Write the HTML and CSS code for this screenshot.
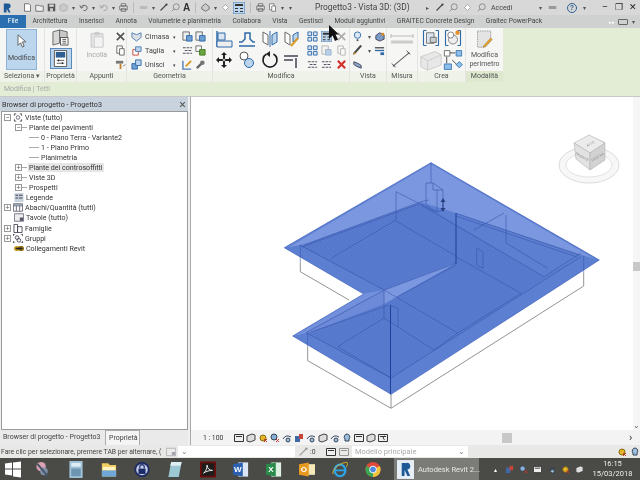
FILE: index.html
```html
<!DOCTYPE html>
<html lang="it">
<head>
<meta charset="utf-8">
<title>Progetto3 - Vista 3D: (3D)</title>
<link rel="stylesheet" href="styles.css">
</head>
<body>
<svg class="defs" width="0" height="0">
  <defs><pattern id="hatch" width="2" height="2" patternUnits="userSpaceOnUse" patternTransform="rotate(-30)"><path d="M0 .5h2" stroke="#3f62bd" stroke-width=".7"/></pattern></defs>
  <symbol id="doc" viewBox="0 0 12 12"><path d="M2 1h6l2 2v8H2z" fill="#fff" stroke="#555"/></symbol>
  <symbol id="folder" viewBox="0 0 12 12"><path d="M1 3h4l1 1h5v7H1z" fill="#eee" stroke="#555"/></symbol>
  <symbol id="save" viewBox="0 0 12 12"><path d="M1 1h10v10H1z" fill="#555"/><path d="M3 2h6v3H3z" fill="#ddd"/><path d="M4 7h4v4H4z" fill="#ccc"/></symbol>
  <symbol id="cube" viewBox="0 0 12 12"><path d="M6 1l5 2.500v5.500l-5 2.500-5-2.500V3.500z" fill="#b8b8b8" stroke="#777"/></symbol>
  <symbol id="undo" viewBox="0 0 12 12"><path d="M3 6a4 3.500 0 1 1 3 4M1 3l2 4 3-2" fill="none" stroke="#666" stroke-width="1.300"/></symbol>
  <symbol id="print" viewBox="0 0 12 12"><path d="M3 1h6v3H3zM1 4h10v5H1zM3 7h6v4H3z" fill="#eee" stroke="#555"/></symbol>
  <symbol id="measure" viewBox="0 0 12 12"><path d="M1 4h10v4H1z" fill="#999"/></symbol>
  <symbol id="line" viewBox="0 0 12 12"><path d="M2 10l8-8" stroke="#444" stroke-width="1.500"/><circle cx="10" cy="2" r="1.500" fill="#444"/></symbol>
  <symbol id="tag" viewBox="0 0 12 12"><circle cx="7" cy="5" r="4" fill="none" stroke="#777"/><path d="M4 8l-3 3" stroke="#777"/></symbol>
  <symbol id="house" viewBox="0 0 12 12"><path d="M6 1l5 4v3l-5 3-5-3V5z" fill="#ccc" stroke="#555"/></symbol>
  <symbol id="diamond" viewBox="0 0 12 12"><path d="M6 2l4 4-4 4-4-4z" fill="#fff" stroke="#999"/></symbol>
  <symbol id="panels" viewBox="0 0 12 12"><path d="M0 0h12v12H0z" fill="#bcd4ec" stroke="#4d7fb5"/><path d="M2 2h8v2H2zM2 6h3v1H2zM2 9h3v1H2zM7 6h3v1H7zM7 9h3v1H7z" fill="#333"/></symbol>
  <symbol id="closex" viewBox="0 0 12 12"><path d="M2 2l8 8M10 2l-8 8" stroke="#555" stroke-width="1.800"/></symbol>
  <symbol id="redx" viewBox="0 0 12 12"><path d="M2 2l8 8M10 2l-8 8" stroke="#d4322c" stroke-width="2.400"/></symbol>
  <symbol id="copy" viewBox="0 0 12 12"><path d="M2 1h6v8H2z" fill="#fff" stroke="#666"/><path d="M5 4h5v7H5z" fill="#fff" stroke="#666"/></symbol>
  <symbol id="brush" viewBox="0 0 12 12"><path d="M1 2h8v3H1z" fill="#777"/><path d="M5 5h2v6H5z" fill="#c08030"/><path d="M9 8l2-2" stroke="#555"/></symbol>
  <symbol id="wall" viewBox="0 0 12 12"><path d="M1 7V2l5 2 5-2v5l-5 4z" fill="#dcdfe3" stroke="#4d7fb5"/></symbol>
  <symbol id="cut" viewBox="0 0 12 12"><path d="M2 5h6v6H2z" fill="#fff" stroke="#c4453a"/><path d="M5 2h6v5H5z" fill="#bcd4ec" stroke="#4d7fb5"/></symbol>
  <symbol id="join" viewBox="0 0 12 12"><path d="M1 5h6v6H1z" fill="#6f9fd4" stroke="#2e6aa8"/><path d="M5 1h6v6H5z" fill="#bcd4ec" stroke="#2e6aa8"/></symbol>
  <symbol id="rect2" viewBox="0 0 12 12"><path d="M1 1h7v9H1z" fill="#eee" stroke="#666"/><path d="M5 5h6v6H5z" fill="#6f9fd4" stroke="#2e6aa8"/></symbol>
  <symbol id="dash" viewBox="0 0 12 12"><path d="M1 3h10M3 6h8M1 9h10" stroke="#556" stroke-width="1.300" stroke-dasharray="3 1"/></symbol>
  <symbol id="green" viewBox="0 0 12 12"><path d="M1 1h6v6H1z" fill="#fff" stroke="#666"/><path d="M5 5h6v6H5z" fill="#6da544" stroke="#3e7a1d"/></symbol>
  <symbol id="pen" viewBox="0 0 12 12"><path d="M1 2v9h9" fill="none" stroke="#4d7fb5" stroke-width="1.500"/><path d="M4 8l6-6" stroke="#d99a26" stroke-width="2"/></symbol>
  <symbol id="wrench" viewBox="0 0 12 12"><path d="M2 10l5-5" stroke="#666" stroke-width="2.500"/><circle cx="8" cy="4" r="2.500" fill="#777"/></symbol>
  <symbol id="align" viewBox="0 0 18 18"><path d="M2 1v16" stroke="#2e6aa8" stroke-width="1.500"/><path d="M3 3h7v7H3z" fill="#dbe6f2" stroke="#2e6aa8"/><path d="M2 11h15v6H2z" fill="#eee" stroke="#2e6aa8"/></symbol>
  <symbol id="offset" viewBox="0 0 18 18"><path d="M1 16h16M1 12h3l3-3V3h5v6l3 3h2" fill="none" stroke="#2e6aa8" stroke-width="1.500"/></symbol>
  <symbol id="mirror1" viewBox="0 0 18 18"><path d="M2 2l5 3v10l-5-3z" fill="#fff" stroke="#666"/><path d="M16 2l-5 3v10l5-3z" fill="#bcd4ec" stroke="#2e6aa8"/><path d="M9 1v16" stroke="#2e6aa8"/></symbol>
  <symbol id="mirror2" viewBox="0 0 18 18"><path d="M2 2l5 3v10l-5-3z" fill="#fff" stroke="#666"/><path d="M15 2l-5 3v7l5-3z" fill="#bcd4ec" stroke="#2e6aa8"/><path d="M8 16l7-8" stroke="#d99a26" stroke-width="2"/></symbol>
  <symbol id="move" viewBox="0 0 18 18"><path d="M9 1l3 3h-2v3H8V4H6zM9 17l-3-3h2v-3h2v3h2zM1 9l3-3v2h3v2H4v2zM17 9l-3 3v-2h-3V8h3V6z" fill="#222"/><circle cx="9" cy="9" r="1.500" fill="none" stroke="#222"/></symbol>
  <symbol id="copy2" viewBox="0 0 18 18"><circle cx="6" cy="5" r="4" fill="#fff" stroke="#555"/><circle cx="11" cy="12" r="4.500" fill="#bcd4ec" stroke="#2e6aa8"/></symbol>
  <symbol id="rotate" viewBox="0 0 18 18"><path d="M12.500 3a7 7 0 1 1-7 0" fill="none" stroke="#222" stroke-width="1.700"/><path d="M9 0v6l-4-3z" fill="#222"/></symbol>
  <symbol id="trim" viewBox="0 0 18 18"><path d="M1 5h14M1 9h9M13 17V7" stroke="#445" stroke-width="1.500"/></symbol>
  <symbol id="grid4" viewBox="0 0 12 12"><path d="M1 1h4v4H1zM7 1h4v4H7zM1 7h4v4H1zM7 7h4v4H7z" fill="#dbe6f2" stroke="#2e6aa8"/></symbol>
  <symbol id="bulb" viewBox="0 0 12 12"><circle cx="6" cy="4.500" r="3.500" fill="#dbe9f7" stroke="#2e6aa8"/><path d="M5 9h2v2H5z" fill="#556"/></symbol>
  <symbol id="boxes" viewBox="0 0 12 12"><path d="M2 5l4-3 5 2v5l-5 2-4-2z" fill="#7a9cc6" stroke="#445"/><path d="M8 2h3v3H8z" fill="#d98a26"/></symbol>
  <symbol id="brush2" viewBox="0 0 12 12"><path d="M1 11l3-2 7-8-2-1-7 8z" fill="#444"/><path d="M1 11l2-3 2 1z" fill="#d99a26"/></symbol>
  <symbol id="lines" viewBox="0 0 12 12"><path d="M1 3h10" stroke="#555" stroke-width="1.500"/><path d="M1 6h10" stroke="#2e6aa8" stroke-width="1.500"/><path d="M7 8h4v3H7z" fill="#2e6aa8"/></symbol>
  <symbol id="boxstack" viewBox="0 0 12 12"><path d="M2 3l5 2 3 2v3l-5-2-3-2z" fill="#8aa8cc" stroke="#445"/></symbol>
  <symbol id="create1" viewBox="0 0 24 24"><path d="M2 2v20M2 2h4M2 22h4M22 2v20M22 2h-4M22 22h-4" fill="none" stroke="#2e6aa8" stroke-width="1.500"/><path d="M6 5h10v14H6z" fill="#dbe6f2" stroke="#555"/><path d="M11 11h8v7h-8z" fill="#ccc" stroke="#555"/></symbol>
  <symbol id="create2" viewBox="0 0 24 24"><path d="M2 2v20M2 2h4M2 22h4M22 2v20M22 2h-4M22 22h-4" fill="none" stroke="#2e6aa8" stroke-width="1.500"/><circle cx="12" cy="14" r="6" fill="#eee" stroke="#666"/><circle cx="9" cy="8" r="4" fill="#fff" stroke="#666"/><circle cx="18" cy="5" r="3" fill="#e8902c"/></symbol>
  <symbol id="mass" viewBox="0 0 26 26"><path d="M1 9l17-6 7 4v12L9 25 1 21z" fill="#e8e8e8" stroke="#c8c8c8"/><path d="M1 9l8 5v11M9 14l16-7" fill="none" stroke="#c8c8c8"/></symbol>
  <symbol id="flow" viewBox="0 0 26 28"><path d="M2 2h7v7H2z" fill="#fff" stroke="#555"/><path d="M17 2h7v7h-7z" fill="#8cc0ec" stroke="#2e6aa8"/><path d="M9 5h7M5 10v8M12 14l6 6" stroke="#222"/><path d="M2 19h9v7H2z" fill="#8cc0ec" stroke="#2e6aa8"/><path d="M21 16l4 4-4 4-4-4z" fill="#8cc0ec" stroke="#2e6aa8"/></symbol>
  <symbol id="modper" viewBox="0 0 22 24"><path d="M2 1h17v13l-7 8H2z" fill="#e4e4e4" stroke="#8e8e8e" stroke-dasharray="2 1"/><path d="M10 20l9-10 2 2-9 9-3 1z" fill="#e8a52c" stroke="#9a6a14" stroke-width=".6"/></symbol>
  <symbol id="clip" viewBox="0 0 16 20"><path d="M1 3h14v16H1z" fill="#e3e3e3" stroke="#c5c5c5"/><path d="M5 1h6v4H5z" fill="#ccc"/><path d="M5 7h10v12H5z" fill="#f2f2f2" stroke="#d0d0d0"/></symbol>
  <symbol id="prop1" viewBox="0 0 18 18"><path d="M1 3l7-2v14l-7 2z" fill="#d8d8d8" stroke="#666"/><path d="M8 1l8 2v6H8z" fill="#c8c8c8" stroke="#666"/><path d="M9 9h8v8H9z" fill="#fff" stroke="#555"/><path d="M11 11h4M11 13h4M11 15h4" stroke="#555"/></symbol>
  <symbol id="prop2" viewBox="0 0 14 18"><path d="M.5.500h13v17H.5z" fill="#fff" stroke="#555"/><path d="M2 2h10v6H2z" fill="#2e5f92"/><path d="M3 11h8M3 14h8" stroke="#555"/><path d="M5 10v2M9 13v2" stroke="#111"/></symbol>
  <symbol id="cursor" viewBox="0 0 10 16"><path d="M1 1v12l3-3 2 5 2-1-2-5h4z" fill="#fff" stroke="#555"/></symbol>
  <symbol id="viewicon" viewBox="0 0 10 10"><path d="M1 3V1h2M7 1h2v2M1 7v2h2M9 7v2H7" fill="none" stroke="#444"/><circle cx="5" cy="5" r="2" fill="none" stroke="#667"/></symbol>
  <symbol id="legend" viewBox="0 0 10 10"><path d="M0 0h10v10H0z" fill="#c9d3dd"/><path d="M1 2h3v1H1zM1 5h3v1H1zM5 2h4v1H5zM5 5h4v1H5z" fill="#445"/></symbol>
  <symbol id="sched" viewBox="0 0 12 10"><path d="M.5.500h11v9H.5z" fill="#fff" stroke="#556"/><path d="M.5 3h11M4 3v6M8 3v6" stroke="#556"/><path d="M1 1h10v2H1z" fill="#8899aa"/></symbol>
  <symbol id="sheet" viewBox="0 0 12 10"><path d="M.5.500h11v9H.5z" fill="#eee" stroke="#667"/><path d="M7 5h4v4H7z" fill="#556"/></symbol>
  <symbol id="fam" viewBox="0 0 10 10"><path d="M.5.500h4v9h-4zM4.500 3h5v6.500h-5z" fill="#fff" stroke="#445"/></symbol>
  <symbol id="grp" viewBox="0 0 10 10"><path d="M0 2V0h2M8 0h2v2M0 8v2h2M10 8v2H8" fill="none" stroke="#445"/><circle cx="4" cy="4" r="2" fill="none" stroke="#445"/><circle cx="6" cy="7" r="2" fill="none" stroke="#445"/></symbol>
  <symbol id="link" viewBox="0 0 12 6"><rect x="0" y="0" width="7" height="6" rx="3" fill="#c9a020"/><rect x="5" y="0" width="7" height="6" rx="3" fill="#8a6c10"/><rect x="2" y="2" width="8" height="2" fill="#222"/></symbol>
  <symbol id="vb1" viewBox="0 0 10 10"><path d="M.5 1.500h9v7h-9z" fill="#eee" stroke="#333"/><path d="M2 3h6v1H2z" fill="#333"/></symbol>
  <symbol id="vb2" viewBox="0 0 10 10"><path d="M1 3l5-2 3 1v5l-5 2-3-1z" fill="#ddd" stroke="#444"/></symbol>
  <symbol id="vb3" viewBox="0 0 10 10"><circle cx="5" cy="5" r="3" fill="#e6b52a" stroke="#8a6c10"/><path d="M6 6l3 3M9 6l-3 3" stroke="#c83428"/></symbol>
  <symbol id="vb4" viewBox="0 0 10 10"><circle cx="4" cy="4" r="3" fill="#8ab0d8" stroke="#345"/><path d="M6 6l3 3M9 6l-3 3" stroke="#c83428"/></symbol>
  <symbol id="vb5" viewBox="0 0 10 10"><path d="M1 6q3-5 8-2" fill="none" stroke="#345"/><circle cx="6" cy="7" r="2" fill="#9cc0dc" stroke="#345"/></symbol>
  <symbol id="vb6" viewBox="0 0 10 10"><path d="M1 3h5v6H1z" fill="#3e6aa8"/><path d="M5 1h4v5H5z" fill="#c8453c"/></symbol>
  <symbol id="vb7" viewBox="0 0 10 10"><path d="M5 1a3 3 0 0 1 2 5v2H3V6a3 3 0 0 1 2-5z" fill="#9ec0e0" stroke="#345"/></symbol>
  <symbol id="win" viewBox="0 0 16 16"><path d="M0 2l7-1v6H0zM8 1l8-1v7H8zM0 8h7v6l-7-1zM8 8h8v8l-8-1z" fill="#fff"/></symbol>
  <symbol id="snip" viewBox="0 0 16 18"><circle cx="6" cy="6" r="5" fill="#d9a2b4"/><circle cx="9" cy="11" r="4" fill="#7d8ea8"/><path d="M2 3l11 13" stroke="#456" stroke-width="2"/></symbol>
  <symbol id="calc" viewBox="0 0 14 18"><path d="M0 0h14v18H0z" fill="#9cc0d4"/><path d="M2 2h10v4H2z" fill="#dfeef5"/><path d="M2 8h10v8H2z" fill="#6e96b0"/></symbol>
  <symbol id="explorer" viewBox="0 0 18 18"><path d="M1 2h7l2 2h7v13H1z" fill="#f0cd60"/><path d="M2 6h14v4H2z" fill="#fff3c0"/><path d="M1 10h16v7H1z" fill="#6fa8d8"/></symbol>
  <symbol id="lock" viewBox="0 0 18 18"><circle cx="9" cy="9" r="8.500" fill="#1c2a66"/><circle cx="9" cy="9" r="6.500" fill="#c5cde6"/><path d="M5 8h8v6H5z" fill="#1c2a66"/><path d="M6.500 8V6a2.500 2.500 0 0 1 5 0v2" fill="none" stroke="#1c2a66" stroke-width="1.300"/></symbol>
  <symbol id="notes" viewBox="0 0 16 18"><path d="M4 1h11l-3 16H1z" fill="#9cc8d4"/><path d="M4 1h11l-1 4H3z" fill="#dfeef2"/></symbol>
  <symbol id="pdf" viewBox="0 0 18 18"><path d="M0 0h18v18H0z" fill="#6c0d0d"/><path d="M2 2h14v14H2z" fill="#1d1d1d"/><path d="M4 13c3-2 4-6 4-9 0 4 3 6 6 6-3 0-7 1-10 3z" fill="none" stroke="#fff"/></symbol>
  <symbol id="ie" viewBox="0 0 18 18"><ellipse cx="9" cy="10" rx="6" ry="6.500" fill="none" stroke="#2ba4e8" stroke-width="2.600"/><path d="M3 10h12" stroke="#2ba4e8" stroke-width="2"/><path d="M1 14C0 8 10 1 17 1c1 2 0 4-1 5" fill="none" stroke="#e2b62a"/></symbol>
  <symbol id="chrome" viewBox="0 0 18 18"><circle cx="9" cy="9" r="8.500" fill="#e24a3a"/><path d="M9 9L1.500 5A8.500 8.500 0 0 0 9 17.500z" fill="#3ba654"/><path d="M9 9v8.500A8.500 8.500 0 0 0 16.500 5z" fill="#f2c63a"/><circle cx="9" cy="9" r="3.800" fill="#4a8ae0" stroke="#fff"/></symbol>
  <symbol id="revit" viewBox="0 0 18 20"><path d="M0 0h18v20H0z" fill="#e8eef6"/><path d="M5 3h5a3.500 3.500 0 0 1 1 7l3 7h-3L8 10.500V17H5z" fill="#1e5a96"/></symbol>
</svg>

<div class="app">
  <header class="titlebar">
    <svg class="logo" viewBox="0 0 10 13"><path d="M1 1h5a3 3 0 0 1 1 6l2.500 5H7L4.500 7.500V12H1z" fill="#1e5a96"/></svg>
    <div class="qat">
      <svg class="q"><use href="#doc"/></svg><svg class="q"><use href="#folder"/></svg><svg class="q"><use href="#save"/></svg><svg class="q dim"><use href="#cube"/></svg><span class="dd">▾</span><svg class="q"><use href="#undo"/></svg><span class="dd">▾</span><svg class="q dim"><use href="#undo"/></svg><span class="dd">▾</span><svg class="q"><use href="#print"/></svg><span class="sep"></span><svg class="q dim"><use href="#measure"/></svg><span class="dd">▾</span><svg class="q"><use href="#line"/></svg><svg class="q"><use href="#tag"/></svg><span class="big-a">A</span><span class="sep"></span><svg class="q"><use href="#house"/></svg><span class="dd">▾</span><svg class="q"><use href="#diamond"/></svg><svg class="q on"><use href="#panels"/></svg><span class="sep"></span><svg class="q"><use href="#print"/></svg><svg class="q"><use href="#copy"/></svg><span class="dd">▾</span><span class="dd">▾</span>
    </div>
    <div class="doc-title">Progetto3 - Vista 3D: (3D)</div>
    <div class="title-right">
      <span class="dd">▸</span>
      <svg class="q"><use href="#line"/></svg><svg class="q"><use href="#tag"/></svg><svg class="q"><use href="#diamond"/></svg><svg class="q"><use href="#tag"/></svg>
      <span class="accedi">Accedi</span><span class="dd gap-l">▾</span>
      <svg class="q"><use href="#measure"/></svg>
      <span class="help">?</span><span class="dd">▾</span>
      <span class="win-btns"><span class="w">–</span><span class="w">❐</span><span class="w">✕</span></span>
    </div>
  </header>

  <nav class="tabs">
    <span class="tab file">File</span>
    <span class="tab">Architettura</span><span class="tab">Inserisci</span><span class="tab">Annota</span><span class="tab">Volumetrie e planimetria</span><span class="tab">Collabora</span><span class="tab">Vista</span><span class="tab">Gestisci</span><span class="tab">Moduli aggiuntivi</span><span class="tab">GRAITEC Concrete Design</span><span class="tab">Graitec PowerPack</span>
    <span class="tab-end"><span class="tiny">▸▸</span><span class="chip"></span><span class="dd">▾</span></span>
  </nav>

  <section class="ribbon">
    <div class="panel p-sel">
      <div class="panel-body">
        <div class="modifica-btn"><svg class="cur"><use href="#cursor"/></svg><span>Modifica</span></div>
      </div>
      <div class="panel-label">Seleziona ▾</div>
    </div>
    <div class="panel p-prop">
      <div class="panel-body col">
        <svg class="i16"><use href="#prop1"/></svg>
        <span class="prop-on"><svg class="i16"><use href="#prop2"/></svg></span>
      </div>
      <div class="panel-label">Proprietà</div>
    </div>
    <div class="panel p-app">
      <div class="panel-body">
        <div class="paste"><svg class="clip"><use href="#clip"/></svg><span>Incolla</span></div>
        <div class="col3">
          <svg class="i12"><use href="#closex"/></svg><svg class="i12"><use href="#copy"/></svg><svg class="i12"><use href="#brush"/></svg>
        </div>
      </div>
      <div class="panel-label">Appunti</div>
    </div>
    <div class="panel p-geo">
      <div class="panel-body">
        <div class="geo-list">
          <div class="geo"><svg class="i12"><use href="#wall"/></svg><span>Cimasa</span><b>▾</b></div>
          <div class="geo"><svg class="i12"><use href="#cut"/></svg><span>Taglia</span><b>▾</b></div>
          <div class="geo"><svg class="i12"><use href="#join"/></svg><span>Unisci</span><b>▾</b></div>
        </div>
        <div class="col3"><svg class="i12"><use href="#rect2"/></svg><svg class="i12"><use href="#dash"/></svg><svg class="i12"><use href="#pen"/></svg></div>
        <div class="col3 c3b"><svg class="i12"><use href="#rect2"/></svg><svg class="i12"><use href="#green"/></svg><svg class="i12"><use href="#wrench"/></svg></div>
      </div>
      <div class="panel-label">Geometria</div>
    </div>
    <div class="panel p-mod">
      <div class="panel-body">
        <div class="mod-grid">
          <svg class="i18"><use href="#align"/></svg><svg class="i18"><use href="#offset"/></svg><svg class="i18"><use href="#mirror1"/></svg><svg class="i18"><use href="#mirror2"/></svg>
          <svg class="i18"><use href="#move"/></svg><svg class="i18"><use href="#copy2"/></svg><svg class="i18"><use href="#rotate"/></svg><svg class="i18"><use href="#trim"/></svg>
        </div>
        <div class="mod-small">
          <svg class="i12"><use href="#grid4"/></svg><svg class="i12 on"><use href="#panels"/></svg><svg class="i12 dim"><use href="#closex"/></svg>
          <svg class="i12"><use href="#grid4"/></svg><svg class="i12 dim"><use href="#rect2"/></svg><svg class="i12 dim"><use href="#copy"/></svg>
          <svg class="i12"><use href="#dash"/></svg><svg class="i12"><use href="#dash"/></svg><svg class="i12"><use href="#redx"/></svg>
        </div>
      </div>
      <div class="panel-label">Modifica</div>
    </div>
    <div class="panel p-vista">
      <div class="panel-body">
        <div class="col3 first"><svg class="i12"><use href="#bulb"/></svg><svg class="i12"><use href="#brush2"/></svg><svg class="i12"><use href="#boxstack"/></svg></div>
        <div class="col3 narrow"><span class="dd">▾</span><span class="dd">▾</span><span class="dd"></span></div>
        <div class="col3 tight"><svg class="i12"><use href="#boxes"/></svg><svg class="i12"><use href="#lines"/></svg><span class="blank"></span></div>
      </div>
      <div class="panel-label">Vista</div>
    </div>
    <div class="panel p-mis">
      <div class="panel-body col">
        <svg class="dim-a" viewBox="0 0 24 12"><path d="M1 3h22M1 1v4M23 1v4" stroke="#bbb" fill="none"/><path d="M1 9h22" stroke="#ccc" stroke-width="3"/></svg>
        <svg class="dim-b" viewBox="0 0 24 20"><path d="M2 18L20 3" stroke="#666" stroke-width="1.200"/><path d="M1 15l4 4M17 1l4 4" stroke="#333"/></svg>
      </div>
      <div class="panel-label">Misura</div>
    </div>
    <div class="panel p-crea">
      <div class="panel-body crea-grid">
        <svg class="i18"><use href="#create1"/></svg><svg class="i18"><use href="#create2"/></svg>
        <svg class="i22"><use href="#mass"/></svg><svg class="i22"><use href="#flow"/></svg>
      </div>
      <div class="panel-label">Crea</div>
    </div>
    <div class="panel p-modal">
      <div class="panel-body col">
        <svg class="i18 mp"><use href="#modper"/></svg>
        <span class="mp-text">Modifica<br>perimetro</span>
      </div>
      <div class="panel-label green">Modalità</div>
    </div>
  </section>

  <div class="optionbar">Modifica | Tetti</div>

  <main class="workspace">
    <aside class="browser">
      <div class="browser-head"><span>Browser di progetto - Progetto3</span><svg class="close"><use href="#closex"/></svg></div>
      <div class="tree">
        <div class="row l0"><span class="exp">−</span><svg class="ti"><use href="#viewicon"/></svg><span class="t">Viste (tutto)</span></div>
        <div class="row l1"><span class="exp">−</span><span class="stem"></span><span class="t">Piante dei pavimenti</span></div>
        <div class="row l2"><span class="stem long"></span><span class="t">0 - Piano Terra - Variante2</span></div>
        <div class="row l2"><span class="stem long"></span><span class="t">1 - Piano Primo</span></div>
        <div class="row l2"><span class="stem long"></span><span class="t">Planimetria</span></div>
        <div class="row l1"><span class="exp">+</span><span class="stem"></span><span class="t sel">Piante dei controsoffitti</span></div>
        <div class="row l1"><span class="exp">+</span><span class="stem"></span><span class="t">Viste 3D</span></div>
        <div class="row l1"><span class="exp">+</span><span class="stem"></span><span class="t">Prospetti</span></div>
        <div class="row l0b"><svg class="ti"><use href="#legend"/></svg><span class="t">Legende</span></div>
        <div class="row l0"><span class="exp">+</span><svg class="ti"><use href="#sched"/></svg><span class="t">Abachi/Quantità (tutti)</span></div>
        <div class="row l0b"><svg class="ti"><use href="#sheet"/></svg><span class="t">Tavole (tutto)</span></div>
        <div class="row l0"><span class="exp">+</span><svg class="ti"><use href="#fam"/></svg><span class="t">Famiglie</span></div>
        <div class="row l0"><span class="exp">+</span><svg class="ti"><use href="#grp"/></svg><span class="t">Gruppi</span></div>
        <div class="row l0b"><svg class="ti"><use href="#link"/></svg><span class="t">Collegamenti Revit</span></div>
      </div>
      <div class="browser-tabs"><span class="btab">Browser di progetto - Progetto3</span><span class="btab active">Proprietà</span></div>
    </aside>

    <section class="view">
      <div class="canvas-row">
        <svg class="canvas" viewBox="190 97 442 333">
          <g fill="none" stroke="#777" stroke-width=".8">
            <path d="M299.300 263V271.700L348 300"/>
            <path d="M306.700 347V360.700L390 408.300 582.700 286V273"/>
            <path d="M390 394V408"/>
          </g>
          <path d="M430 162.700L598.300 260 390 394.300 291.700 336 362.700 294 283.300 247.700z" fill="#5c7fd1" stroke="#4262bd" stroke-width=".7"/>
          <path d="M303 246L420 203 543 277 580 256 390 378 305 333 383 290 299 246z" fill="url(#hatch)" opacity=".55"/>
          <path d="M430 164L594 259 578 254 455 213 420 202 304 244 288 247z" fill="#7b97df"/>
          <path d="M455 263L383 290 362 294 383 304z" fill="#7b97df"/>
          <path d="M383 290L305 333 293 336 362 295z" fill="#7390dc"/>
          <path d="M383 304L310 332 305 333 383 290z" fill="#6c8ad8"/>
          <g fill="none" stroke="#3553a8" stroke-width=".55">
            <path d="M303 245L420 201.700 428 200M301 247L418 204"/>
            <path d="M455 213.300L578.300 255M455 216L576 257"/>
            <path d="M455 263.300L383.300 290 305 332.700M455 265L396 297"/>
            <path d="M388 305L310 332"/>
            <path d="M299 245L383 290 456.700 333 520 293.300 455 256.700"/>
            <path d="M390 378L580 256.700M390 378L305 332.700"/>
            <path d="M395 191.700V220L330 258.300M395 221L455 256"/>
            <path d="M395 191.700L435 212M430 162.700V183"/>
            <path d="M505 215V243L546.700 268.300M473 230L503 213M420 205L543 276.700 580 253"/>
            <path d="M336.700 346.700L383 318 433 350M336.700 346.700L390 378M433 350L456.700 333"/>
            <path d="M383 290V318M299.300 245V263M306.700 333V347M582.700 256V273"/>
            <path d="M475.700 248.300L482 252V268.300L475.700 265z"/>
            <path d="M390 305.700L397 308.300V326.700"/>
            <path d="M425 183H432L442 190V210L436 212 425 205zM432 183V190L442 190M436 212V190"/>
          </g>
          <path d="M389.500 305V394M455 213V264" fill="none" stroke="#1f3f9c" stroke-width="1"/>
          <path d="M442 198l2.500 4h-5zM442 212l2.500-4h-5z" fill="#2a3f80"/>
          <path d="M442 202v6" stroke="#2a3f80"/>
          <g class="cube">
            <ellipse cx="588" cy="165" rx="30" ry="18" fill="#f7f7f7" stroke="#dcdcdc"/>
            <ellipse cx="588" cy="165" rx="23" ry="12" fill="#fff" stroke="#e2e2e2"/>
            <path d="M588 135L574 143 575 158 589 170 604 160V142z" fill="#d8d8d8"/>
            <path d="M588 135L604 143 589 153 573 143z" fill="#ececec" stroke="#aaa" stroke-width=".5"/>
            <path d="M573 143L589 153V170L575 159z" fill="#e2e2e2" stroke="#aaa" stroke-width=".5"/>
            <path d="M589 153L604 143V160L589 170z" fill="#d2d2d2" stroke="#aaa" stroke-width=".5"/>
            <text x="589" y="145" class="cube-t" transform="rotate(-30 589 143)">ALTO</text>
            <text x="581" y="158" class="cube-t" transform="rotate(30 581 157)">FRONTE</text>
            <text x="597" y="158" class="cube-t" transform="rotate(-30 597 157)">DESTRA</text>
          </g>
        </svg>
        <div class="vscroll"><span class="thumb-v"></span><span class="arrow-down">⌄</span></div>
      </div>
      <div class="viewbar">
        <span class="scale">1 : 100</span>
        <span class="vb-icons">
          <svg class="vb"><use href="#vb1"/></svg><svg class="vb"><use href="#vb2"/></svg><svg class="vb"><use href="#vb3"/></svg><svg class="vb"><use href="#vb4"/></svg><svg class="vb"><use href="#vb5"/></svg><svg class="vb"><use href="#vb6"/></svg><svg class="vb"><use href="#vb5"/></svg><svg class="vb"><use href="#vb2"/></svg><svg class="vb"><use href="#vb5"/></svg><svg class="vb"><use href="#vb7"/></svg><svg class="vb"><use href="#vb1"/></svg><svg class="vb"><use href="#vb2"/></svg><svg class="vb"><use href="#vb1"/></svg>
        </span>
        <span class="chev">‹</span>
        <span class="hscroll"><span class="thumb-h"></span></span>
        <span class="chev">›</span>
      </div>
    </section>
  </main>

  <footer class="statusbar">
    <span class="status-text">Fare clic per selezionare, premere TAB per alternare, (</span>
    <svg class="st-ic dim"><use href="#sheet"/></svg>
    <span class="combo c1"><span>⌄</span></span>
    <svg class="st-ic dim"><use href="#line"/></svg>
    <span class="zero">:0</span>
    <svg class="st-ic"><use href="#vb1"/></svg><svg class="st-ic dim"><use href="#vb1"/></svg>
    <span class="combo c2"><em>Modello principale</em><span>⌄</span></span>
    <span class="st-right"><svg class="st-ic"><use href="#vb3"/></svg><svg class="st-ic"><use href="#vb7"/></svg></span>
  </footer>

  <div class="taskbar">
    <svg class="tb win"><use href="#win"/></svg>
    <svg class="tb"><use href="#snip"/></svg>
    <svg class="tb"><use href="#calc"/></svg>
    <svg class="tb"><use href="#explorer"/></svg>
    <svg class="tb"><use href="#lock"/></svg>
    <svg class="tb"><use href="#notes"/></svg>
    <svg class="tb"><use href="#pdf"/></svg>
    <svg class="tb" viewBox="0 0 18 18"><path d="M6 1h11v16H6z" fill="#dbe6f6"/><path d="M0 3l11-2v16L0 15z" fill="#2b5fb0"/><text x="1" y="12" class="app-l">W</text></svg>
    <svg class="tb" viewBox="0 0 18 18"><path d="M6 1h11v16H6z" fill="#dcefe0"/><path d="M0 3l11-2v16L0 15z" fill="#2a8a4a"/><text x="2.500" y="12" class="app-l">X</text></svg>
    <svg class="tb" viewBox="0 0 18 18"><path d="M6 3h12v12H6z" fill="#f7e8b8"/><path d="M0 3l11-2v16L0 15z" fill="#e89a20"/><text x="2" y="12" class="app-l">O</text></svg>
    <svg class="tb"><use href="#ie"/></svg>
    <svg class="tb"><use href="#chrome"/></svg>
    <div class="task-active"><svg class="tb-r"><use href="#revit"/></svg><span>Autodesk Revit 2...</span></div>
    <div class="tray"><span class="tr-up">▴</span><svg class="tr"><use href="#vb6"/></svg><svg class="tr"><use href="#vb4"/></svg><svg class="tr"><use href="#vb1"/></svg><svg class="tr"><use href="#vb5"/></svg><svg class="tr"><use href="#vb3"/></svg><svg class="tr"><use href="#vb2"/></svg></div>
    <div class="clock">16:15<br>15/03/2018</div>
  </div>

  <svg class="mouse" viewBox="0 0 10 16"><path d="M0 0v14l3.500-3.500L6 16l3-1.500-2.500-5H10z" fill="#111"/></svg>
</div>
</body>
</html>
```

FILE: styles.css
```css
* { box-sizing: border-box; }
html, body { margin: 0; padding: 0; }
body {
  width: 640px;
  height: 480px;
  overflow: hidden;
  font-family: Roboto, "Liberation Sans", sans-serif;
  color: #444;
  background: #fff;
}
.defs { position: absolute; }
svg { display: block; flex: none; }
.app { position: relative; width: 640px; height: 480px; display: flex; flex-direction: column; filter: blur(.35px); }
.dim { opacity: .45; }

/* title bar */
.titlebar { height: 15px; background: #d8d8d8; display: flex; align-items: center; padding-left: 3px; }
.logo { width: 8px; height: 12px; margin-right: 12px; }
.qat { display: flex; align-items: center; gap: 3px; width: 288px; flex: none; }
.q { width: 9px; height: 9px; }
.q.on { width: 12px; height: 12px; }
.dd { font-size: 6px; color: #555; line-height: 1; width: 5px; text-align: center; flex: none; }
.sep { width: 1px; height: 11px; background: #bbb; margin: 0 2px; }
.big-a { font: 700 10px "Liberation Sans", sans-serif; color: #333; }
.doc-title { width: 115px; font-size: 8.400px; line-height: 15px; white-space: nowrap; color: #444; margin-left: 4px; }
.title-right { flex: 1; display: flex; align-items: center; gap: 5px; }
.accedi { font-size: 7px; color: #444; width: 40px; }
.gap-l { margin-left: 2px; }
.help { width: 10px; height: 10px; border: 1px solid #2e5f92; border-radius: 50%; font: 700 7px/8px "Liberation Sans", sans-serif; text-align: center; color: #2e5f92; margin-left: 5px; }
.win-btns { display: flex; margin-left: 6px; }
.w { width: 14px; font-size: 9px; text-align: center; color: #222; line-height: 15px; }

/* tabs */
.tabs { height: 13px; background: #cfd1d1; display: flex; align-items: center; gap: 11.500px; font-size: 6.700px; white-space: nowrap; padding-right: 4px; }
.tab { line-height: 13px; color: #444; }
.tab.file { width: 26px; background: #2a6fb0; color: #fff; text-align: center; margin-right: -5px; }
.tab-end { margin-left: auto; display: flex; align-items: center; gap: 3px; }
.tiny { font-size: 5px; color: #fff; }
.chip { width: 10px; height: 6px; border: 1px solid #666; border-radius: 1px; }

/* ribbon */
.ribbon { height: 54px; background: #e3edd6; display: flex; }
.panel { display: flex; flex-direction: column; background: #f6f6f5; border-right: 1px solid #e4e4e2; flex: none; }
.panel-body { height: 43px; display: flex; padding-top: 1px; }
.panel-label { height: 11px; background: #eef2e8; font-size: 7px; line-height: 11px; text-align: center; color: #555; white-space: nowrap; }
.panel-label.green { background: #dde8cf; }
.col { flex-direction: column; align-items: center; gap: 2px; }
.p-sel { width: 45px; } .p-prop { width: 32px; } .p-app { width: 50px; } .p-geo { width: 86px; }
.p-mod { width: 137px; } .p-vista { width: 37px; } .p-mis { width: 31px; } .p-crea { width: 48px; } .p-modal { width: 37px; border-right: 0; }
.modifica-btn { width: 31px; height: 41px; margin-left: 6px; background: #bcd6ee; border: 1px solid #8fb3d6; display: flex; flex-direction: column; align-items: center; gap: 6px; padding-top: 4px; font-size: 7px; color: #444; }
.cur { width: 9px; height: 14px; }
.i16 { width: 17px; height: 17px; }
.prop-on { width: 22px; height: 21px; background: #bcd6ee; border: 1px solid #5a8abc; display: flex; align-items: center; justify-content: center; }
.paste { width: 29px; margin-left: 7px; display: flex; flex-direction: column; align-items: center; font-size: 7px; color: #aaa; gap: 3px; padding-top: 2px; }
.clip { width: 14px; height: 17px; }
.col3 { display: flex; flex-direction: column; gap: 3px; padding-top: 2px; width: 13px; margin-left: 5px; }
.c3b { margin-left: 0; }
.col3.first { margin-left: 2px; }
.i12 { width: 11px; height: 11px; }
.geo-list { display: flex; flex-direction: column; gap: 3px; padding: 2px 0 0 4px; width: 50px; }
.geo { display: flex; align-items: center; height: 11px; font-size: 7.200px; gap: 3px; }
.geo span { width: 25px; }
.geo b { font-size: 5px; font-weight: 400; }
.mod-grid { display: grid; grid-template-columns: 23px 23px 22px 22px; row-gap: 3px; padding: 1px 0 0 2px; height: 40px; align-content: start; }
.i18 { width: 18px; height: 18px; }
.mod-small { display: grid; grid-template-columns: 14px 15px 13px; row-gap: 3px; align-content: start; padding-top: 2px; margin-left: 2px; }
.narrow { width: 5px; margin-left: 2px; }
.narrow .dd { height: 11px; line-height: 11px; }
.tight { margin-left: 2px; }
.blank { height: 11px; }
.dim-a { width: 24px; height: 12px; margin-top: 4px; }
.dim-b { width: 22px; height: 20px; margin-top: 2px; }
.crea-grid { display: grid; grid-template-columns: 22px 22px; justify-items: center; row-gap: 2px; align-content: start; padding-left: 2px; }
.i22 { width: 22px; height: 22px; }
.mp { width: 17px; height: 19px; margin-top: 1px; }
.mp-text { font-size: 7px; line-height: 9px; text-align: center; color: #555; }

/* options bar */
.optionbar { height: 15px; background: #e3edd6; border-bottom: 1px solid #c8c8c8; padding-left: 4px; font-size: 7px; line-height: 14px; color: #a8a8a8; }

/* workspace */
.workspace { height: 348px; display: flex; background: #f0f0f0; }
.browser { width: 188px; display: flex; flex-direction: column; margin-right: 2px; }
.browser-head { height: 14px; background: #c8d3de; display: flex; align-items: center; justify-content: space-between; padding: 0 2px; font-size: 7.200px; color: #333; }
.close { width: 7px; height: 7px; }
.tree { flex: 1; margin-left: 1px; background: #fff; border: 1px solid #9a9a9a; font-size: 7.100px; }
.row { height: 10.100px; display: flex; align-items: center; white-space: nowrap; color: #333; }
.l0 { padding-left: 2px; } .l0b { padding-left: 12px; }
.l1 { padding-left: 13px; } .l2 { padding-left: 27px; }
.exp { width: 7px; height: 7px; border: 1px solid #999; font: 7px/5px "Liberation Sans", sans-serif; text-align: center; color: #555; flex: none; background: #fff; }
.ti { width: 10px; height: 9px; margin-left: 2px; }
.l0b .ti { margin-left: 0; }
.t { margin-left: 1px; padding: 0 1px; }
.stem { width: 5px; height: 1px; background: #aaa; flex: none; }
.stem.long { width: 10px; }
.t.sel { background: #e6e6e6; }
.browser-tabs { height: 15px; background: #eaeaea; display: flex; font-size: 7px; line-height: 14px; color: #444; }
.btab { padding: 0 3px; width: 105px; white-space: nowrap; }
.btab.active { width: 35px; background: #f4f4f4; border: 1px solid #aaa; border-bottom: 0; padding: 0 3px; }

.view { flex: 1; display: flex; flex-direction: column; background: #fff; border-left: 1px solid #aaa; }
.canvas-row { flex: 1; display: flex; min-height: 0; }
.canvas { width: 442px; height: 333px; background: #fff; }
.cube-t { font: 3.500px "Liberation Sans", sans-serif; fill: #8a8a8a; text-anchor: middle; }
.vscroll { flex: 1; background: #f6f6f6; display: flex; flex-direction: column; align-items: center; }
.thumb-v { width: 7px; height: 9px; background: #c8c8c8; margin-top: 165px; }
.arrow-down { margin-top: auto; font-size: 8px; line-height: 8px; color: #666; }
.viewbar { height: 15px; background: #f3f3f3; display: flex; align-items: center; font-size: 6.800px; padding-left: 12px; color: #333; }
.scale { width: 31px; }
.vb-icons { display: flex; gap: 2px; width: 148px; }
.vb { width: 10px; height: 10px; }
.chev { font-size: 11px; line-height: 11px; width: 6px; color: #333; }
.hscroll { width: 237px; height: 13px; margin: 0 2px; display: flex; padding-left: 112px; }
.thumb-h { width: 10px; height: 10px; background: #c8c8c8; margin-top: 2px; }

/* status bar */
.statusbar { height: 13px; background: #e8e8e6; display: flex; align-items: center; font-size: 6.800px; color: #444; white-space: nowrap; padding-left: 1px; }
.status-text { width: 162px; }
.st-ic { width: 10px; height: 10px; margin-left: 3px; }
.combo { height: 11px; background: #fff; display: flex; align-items: center; justify-content: space-between; padding: 0 3px; font-size: 7.500px; color: #888; }
.combo em { font-style: normal; color: #aaa; }
.c1 { width: 117px; margin-left: 2px; }
.c2 { width: 116px; margin-left: 3px; }
.zero { width: 5px; margin-left: 2px; margin-right: 8px; }
.st-right { margin-left: auto; display: flex; }

/* taskbar */
.taskbar { height: 22px; background: #4a4a46; display: flex; align-items: center; color: #fff; padding-left: 5px; }
.tb { width: 16px; height: 17px; margin-right: 17px; }
.tb.win { margin-right: 14px; }
.task-active { width: 85px; height: 22px; background: #7b7b78; display: flex; align-items: center; font-size: 7.500px; margin-left: -4px; white-space: nowrap; color: #e8e8e8; }
.tb-r { width: 17px; height: 19px; margin: 0 4px 0 3px; }
.tray { display: flex; align-items: center; margin-left: 15px; gap: 5px; width: 92px; }
.tr-up { font-size: 6px; width: 6px; }
.tr { width: 9px; height: 9px; }
.clock { margin-left: auto; width: 52px; padding-right: 3px; font-size: 7.500px; line-height: 10px; text-align: center; color: #eee; }
.app-l { font: 700 9px "Liberation Sans", sans-serif; fill: #fff; }

.mouse { position: absolute; left: 329px; top: 25px; width: 10px; height: 16px; }
```
